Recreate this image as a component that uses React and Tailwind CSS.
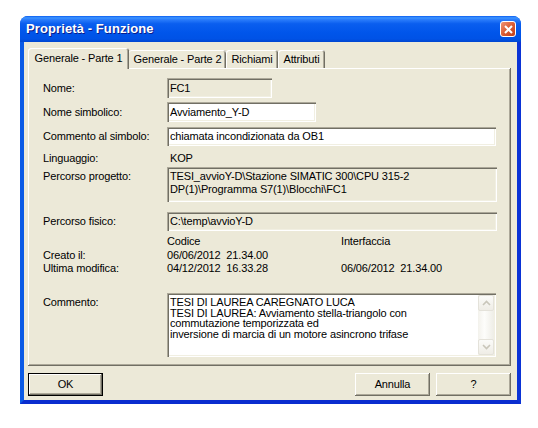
const sunken =
  "shadow-[inset_1px_1px_0_#aca899,inset_2px_2px_0_#716f64,inset_-1px_-1px_0_#ffffff,inset_-2px_-2px_0_#f1efe2]";
const raised =
  "shadow-[inset_-1px_-1px_0_#716f64,inset_1px_1px_0_#ffffff,inset_-2px_-2px_0_#aca899]";

function Label({ children, className = "" }) {
  return <div className={"w-[124px] shrink-0 " + className}>{children}</div>;
}

function Chevron({ up }) {
  return (
    <svg width="9" height="6" viewBox="0 0 9 6">
      <path
        d={up ? "M1 5 L4.5 1.5 L8 5" : "M1 1 L4.5 4.5 L8 1"}
        fill="none"
        stroke="#c9c6ba"
        strokeWidth="1.6"
      />
    </svg>
  );
}

function ScrollBtn({ up }) {
  return (
    <div className="h-[16px] w-[16px] rounded-[2px] border border-[#e4e2da] bg-[linear-gradient(180deg,#fbfbf9,#efede6)] flex items-center justify-center">
      <Chevron up={up} />
    </div>
  );
}

export default function App() {
  return (
    <div className="w-[538px] h-[428px] bg-white pt-[16px] pl-[20px] font-['Liberation_Sans',Arial,sans-serif] text-[11px] tracking-[-0.15px] text-black">
      <div className="w-[501px] h-[388px] flex flex-col rounded-t-[8px] overflow-hidden bg-[#0055e5]">
        {/* Title bar */}
        <div className="h-[26px] shrink-0 flex items-center pl-[6px] pr-[5px] bg-[linear-gradient(180deg,#0a5cf1_0%,#3d95ff_7%,#2a7cfb_14%,#0a5eef_30%,#0055ea_65%,#0052e6_88%,#0046d0_100%)]">
          <span className="text-white font-bold text-[13px] tracking-[0.1px] [text-shadow:1px_1px_0_#0a1c8a]">
            Proprietà - Funzione
          </span>
          <div className="ml-auto w-[16px] h-[16px] rounded-[3px] border border-white bg-[linear-gradient(135deg,#f09474,#d9582f_55%,#c0401c)] flex items-center justify-center">
            <svg width="9" height="9" viewBox="0 0 9 9">
              <path d="M1 1 L8 8 M8 1 L1 8" stroke="#fff" strokeWidth="2" />
            </svg>
          </div>
        </div>

        {/* Client */}
        <div className="flex-1 flex flex-col bg-[#ece9d8] border-l-4 border-r-4 border-b-4 border-l-[#0b5ae6] border-r-[#0a33d6] border-b-[#0a2dcf] px-[4px] pt-[6px]">
          {/* Tabs */}
          <div className="flex items-end h-[20px]">
            <div className="relative w-[101px] h-[21px] -mb-[1px] bg-[#ece9d8] rounded-t-[3px] flex items-center justify-center whitespace-nowrap pb-[1px] shadow-[inset_1px_1px_0_#ffffff,inset_-1px_0_0_#716f64,inset_-2px_0_0_#aca899]">
              Generale - Parte 1
            </div>
            <div className="w-[97px] h-[18px] rounded-t-[3px] flex items-center justify-center whitespace-nowrap shadow-[inset_0_1px_0_#ffffff,inset_-1px_0_0_#716f64,inset_-2px_0_0_#aca899]">
              Generale - Parte 2
            </div>
            <div className="w-[52px] h-[18px] rounded-t-[3px] flex items-center justify-center whitespace-nowrap shadow-[inset_1px_1px_0_#ffffff,inset_-1px_0_0_#716f64,inset_-2px_0_0_#aca899]">
              Richiami
            </div>
            <div className="w-[47px] h-[18px] rounded-t-[3px] flex items-center justify-center whitespace-nowrap shadow-[inset_1px_1px_0_#ffffff,inset_-1px_0_0_#716f64,inset_-2px_0_0_#aca899]">
              Attributi
            </div>
          </div>

          {/* Panel */}
          <div className="w-[483px] h-[298px] pl-[15px] pt-[10px] flex flex-col shadow-[inset_-1px_-1px_0_#716f64,inset_1px_1px_0_#ffffff,inset_-2px_-2px_0_#aca899]">
            <div className="flex items-center h-[20px]">
              <Label>Nome:</Label>
              <div className={"w-[105px] h-[20px] px-[3px] flex items-center " + sunken}>FC1</div>
            </div>
            <div className="flex items-center h-[20px] mt-[4px]">
              <Label>Nome simbolico:</Label>
              <div className={"w-[149px] h-[20px] px-[3px] flex items-center bg-white " + sunken}>
                Avviamento_Y-D
              </div>
            </div>
            <div className="flex items-center h-[19px] mt-[5px]">
              <Label>Commento al simbolo:</Label>
              <div className={"w-[329px] h-[19px] px-[3px] flex items-center bg-white " + sunken}>
                chiamata incondizionata da OB1
              </div>
            </div>
            <div className="flex items-center h-[16px] mt-[4px]">
              <Label>Linguaggio:</Label>
              <div className="pl-[3px]">KOP</div>
            </div>
            <div className="flex items-start h-[35px] mt-[1px]">
              <Label className="pt-[3px] leading-[13px]">Percorso progetto:</Label>
              <div className={"w-[330px] h-[35px] px-[3px] pt-[3px] leading-[13px] " + sunken}>
                <div>TESI_avvioY-D\Stazione SIMATIC 300\CPU 315-2</div>
                <div>DP(1)\Programma S7(1)\Blocchi\FC1</div>
              </div>
            </div>
            <div className="flex items-center h-[19px] mt-[10px]">
              <Label>Percorso fisico:</Label>
              <div className={"w-[330px] h-[19px] px-[3px] flex items-center " + sunken}>
                C:\temp\avvioY-D
              </div>
            </div>
            <div className="flex items-center h-[13px] mt-[4px]">
              <Label></Label>
              <div className="w-[174px]">Codice</div>
              <div>Interfaccia</div>
            </div>
            <div className="flex items-center h-[14px]">
              <Label>Creato il:</Label>
              <div className="w-[174px] whitespace-pre">06/06/2012  21.34.00</div>
            </div>
            <div className="flex items-center h-[13px]">
              <Label>Ultima modifica:</Label>
              <div className="w-[174px] whitespace-pre">04/12/2012  16.33.28</div>
              <div className="whitespace-pre">06/06/2012  21.34.00</div>
            </div>
            <div className="flex items-start h-[64px] mt-[18px]">
              <Label className="pt-[3px] leading-[13px]">Commento:</Label>
              <div className={"w-[329px] h-[64px] flex bg-white " + sunken}>
                <div className="flex-1 pl-[3px] pt-[4px] leading-[10.5px]">
                  <div>TESI DI LAUREA CAREGNATO LUCA</div>
                  <div>TESI DI LAUREA: Avviamento stella-triangolo con</div>
                  <div>commutazione temporizzata ed</div>
                  <div>inversione di marcia di un motore asincrono trifase</div>
                </div>
                <div className="w-[16px] my-[2px] mr-[2px] flex flex-col bg-[linear-gradient(90deg,#f3f2ec,#fdfdfb_40%,#eeede6)]">
                  <ScrollBtn up />
                  <div className="flex-1" />
                  <ScrollBtn />
                </div>
              </div>
            </div>
          </div>

          {/* Buttons */}
          <div className="w-[483px] h-[23px] mt-[7px] flex">
            <div className="w-[75px] h-[23px] border border-black">
              <div className={"w-full h-full flex items-center justify-center " + raised}>OK</div>
            </div>
            <div className={"ml-auto w-[75px] h-[23px] flex items-center justify-center " + raised}>
              Annulla
            </div>
            <div className={"ml-[6px] w-[75px] h-[23px] flex items-center justify-center " + raised}>
              ?
            </div>
          </div>
        </div>
      </div>
    </div>
  );
}
